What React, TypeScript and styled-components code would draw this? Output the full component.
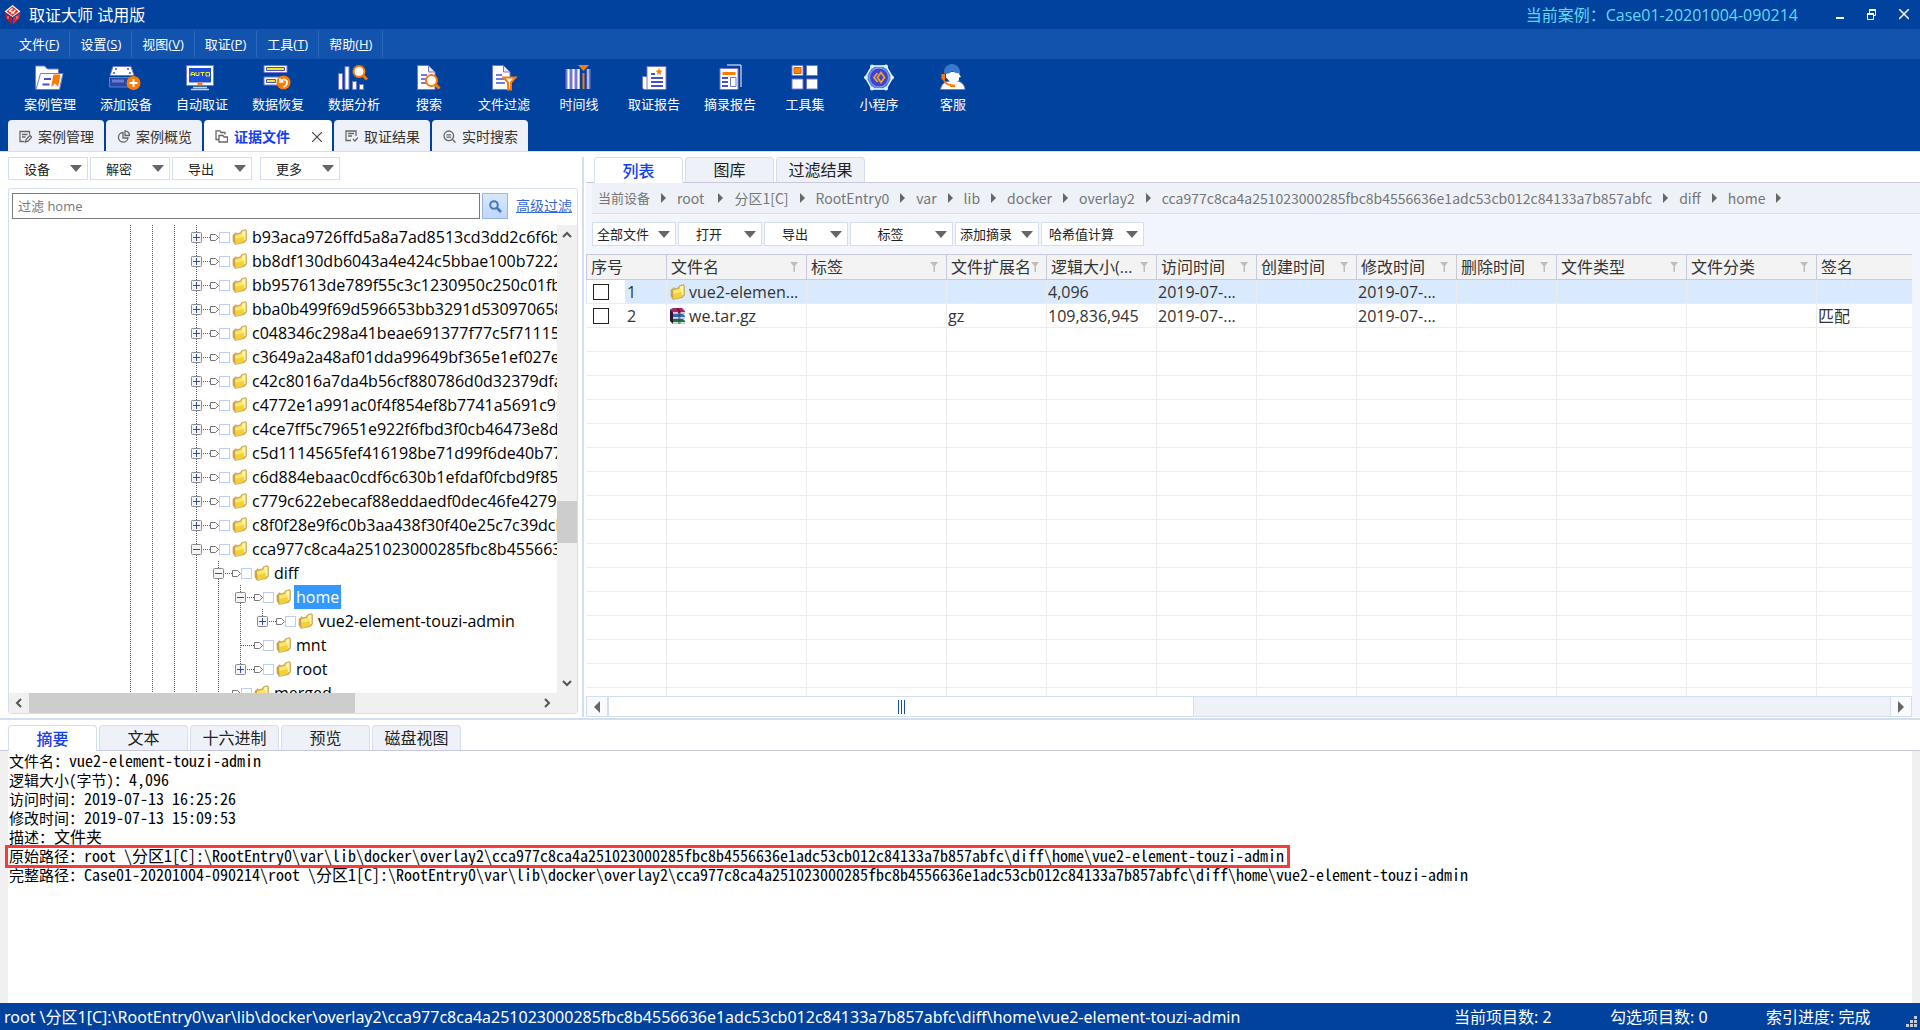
import React, { useState } from "react";
import styled, { createGlobalStyle, css } from "styled-components";

const UI = `"Open Sans", "Noto Sans CJK SC", sans-serif`;
const PATH = `"Noto Sans CJK SC", sans-serif`;
const STATUS = `"Noto Sans", "Noto Sans CJK SC", sans-serif`;
const MONO = `"Noto Sans Mono CJK SC", "Noto Sans CJK SC", "Liberation Mono", monospace`;

const c = {
  navy: "#00429e",
  menu: "#1253ae",
  line: "#d3def0",
  edge: "#c8c9dc",
  pale: "#eef2f8",
  panel: "#f2f5fb",
  blue: "#1240f0",
  orange: "#ff7a00",
  violet: "#7577cf",
  indigo: "#4550cf",
};

const Global = createGlobalStyle`
  *, *::before, *::after { box-sizing: border-box; }
  html, body, #root { height: 100%; }
  body { margin: 0; background: #fff; font-family: ${UI}; color: #222; }
  button, input { font-family: inherit; }
  ul, ol, dl, dd { margin: 0; padding: 0; list-style: none; }
`;

const Window = styled.div`
  height: 100vh;
  display: grid;
  grid-template-rows: auto minmax(0, 2fr) auto minmax(0, 1fr) auto;
  overflow: hidden;
`;

/* ---------- header ---------- */

const Header = styled.header`
  background: ${c.navy};
  border-bottom: 1px solid ${c.line};
  color: #fff;
`;

const TitleBar = styled.div`
  display: flex;
  align-items: center;
  height: 29px;
  padding: 0 10px 0 4px;
`;

const AppName = styled.h1`
  flex: 1;
  margin: 0 0 0 8px;
  font-size: 16px;
  line-height: 24px;
  font-weight: 400;
`;

const CaseName = styled.span`
  font-size: 16px;
  line-height: 24px;
  color: #5fd9f6;
  margin-right: 26px;
`;

const WindowButton = styled.button`
  display: flex;
  align-items: center;
  justify-content: center;
  width: 32px;
  height: 24px;
  padding: 0;
  border: 0;
  background: none;
  color: #fff;
  &:last-child { width: 24px; margin-left: 4px; margin-right: -6px; }
`;

const MenuBar = styled.nav`
  display: flex;
  height: 30px;
  padding: 2px 0 2px 9px;
  background: ${c.menu};
`;

const MenuItem = styled.button`
  padding: 0 10px;
  border: 0;
  border-right: 1px solid #2c69bd;
  background: none;
  color: #fff;
  font-size: 13px;
  line-height: 24px;
`;

const Tools = styled.div`
  display: flex;
  height: 61px;
  padding: 4px 12px 0;
`;

const Tool = styled.button`
  display: flex;
  flex-direction: column;
  align-items: center;
  gap: 1px;
  min-width: 74px;
  padding: 0 12px;
  border: 0;
  background: none;
  color: #fff;
  font-size: 13px;
  line-height: 20px;
  white-space: nowrap;
`;

const ToolIcon = styled.svg`
  display: block;
  flex: none;
  overflow: visible;
`;

const WorkTabs = styled.div`
  display: flex;
  gap: 2px;
  height: 31px;
  padding-left: 8px;
`;

const WorkTab = styled.button<{ $active?: boolean }>`
  display: flex;
  align-items: center;
  gap: 6px;
  padding: 2px 10px 0 11px;
  border: 0;
  border-radius: 4px 4px 0 0;
  background: ${(p) => (p.$active ? "#fff" : c.pale)};
  color: ${(p) => (p.$active ? c.blue : "#333")};
  font-size: 14px;
  line-height: 20px;
  font-weight: ${(p) => (p.$active ? 700 : 400)};
  svg { color: #666; }
`;

const CloseMark = styled.svg`
  margin-left: 16px;
`;

/* ---------- shared parts ---------- */

const DropButton = styled.button<{ $wide?: boolean; $side?: boolean }>`
  display: flex;
  align-items: center;
  width: ${(p) => (p.$side ? 80 : p.$wide ? 103 : 84)}px;
  height: ${(p) => (p.$side ? 23 : 24)}px;
  padding: 0 5px 0 0;
  border: 1px solid ${c.line};
  background: #fff;
  color: #222;
  font-size: 13px;
  line-height: 20px;
  white-space: nowrap;
  span { flex: 1; padding-right: 5px; text-align: center; }
`;

const PageTabs = styled.div`
  display: flex;
  gap: 2px;
  height: 26px;
  padding-left: 8px;
  border-bottom: 1px solid ${c.edge};
`;

const PageTab = styled.button<{ $active?: boolean }>`
  width: 89px;
  padding: 0;
  border: 1px solid ${c.line};
  border-bottom: 0;
  border-radius: 4px 4px 0 0;
  background: ${(p) => (p.$active ? "#fff" : c.pale)};
  color: ${(p) => (p.$active ? c.blue : "#222")};
  font-size: 16px;
  line-height: 24px;
  font-weight: ${(p) => (p.$active ? 500 : 400)};
  margin-bottom: ${(p) => (p.$active ? -1 : 0)}px;
`;

/* ---------- left pane ---------- */

const Upper = styled.main`
  display: grid;
  grid-template-columns: 582px 2px minmax(0, 1fr);
  padding: 5px 0 1px;
`;

const Divider = styled.div`
  background: ${c.line};
`;

const SidePane = styled.section`
  display: flex;
  flex-direction: column;
  gap: 8px;
  min-height: 0;
  padding: 0 4px 3px 8px;
`;

const SideTools = styled.div`
  display: flex;
  gap: 2px;
  button:last-child { margin-left: 6px; }
`;

const SideBox = styled.div`
  flex: 1;
  min-height: 0;
  display: flex;
  flex-direction: column;
  border: 1px solid ${c.line};
  border-radius: 3px;
`;

const FilterRow = styled.form`
  display: flex;
  align-items: center;
  height: 36px;
  padding: 0 5px 2px 3px;
`;

const FilterInput = styled.input`
  flex: 1;
  min-width: 0;
  height: 26px;
  padding: 0 5px;
  border: 1px solid #7a7a7a;
  font-size: 13px;
  &::placeholder { color: #777; opacity: 1; }
`;

const SearchButton = styled.button`
  display: flex;
  align-items: center;
  justify-content: center;
  width: 26px;
  height: 26px;
  margin: 0 8px 0 2px;
  padding: 0;
  border: 1px solid #9bb7e0;
  background: linear-gradient(#d9e7fd, #bfd7fb);
`;

const AdvancedLink = styled.a`
  color: #3568d4;
  font-size: 14px;
  line-height: 20px;
`;

const TreeFrame = styled.div`
  flex: 1;
  min-height: 0;
  display: grid;
  grid-template: minmax(0, 1fr) 20px / minmax(0, 1fr) 20px;
`;

const Tree = styled.ul`
  overflow: hidden;
  padding-left: 110px;
`;

const TreeRow = styled.li`
  display: flex;
  align-items: center;
  height: 24px;
  svg { flex: none; }
`;

const TreeCheck = styled.input`
  appearance: none;
  flex: none;
  width: 11px;
  height: 11px;
  margin: 0 2px 0 0;
  border: 1px solid #b9cdf5;
  background: #fff;
`;

const TreeLabel = styled.span<{ $selected?: boolean }>`
  margin-left: 3px;
  padding: 0 2px;
  font-size: 16px;
  line-height: 24px;
  white-space: nowrap;
  color: ${(p) => (p.$selected ? "#fff" : "#000")};
  background: ${(p) => (p.$selected ? "#3399ff" : "transparent")};
`;

const ScrollTrack = styled.div<{ $horizontal?: boolean }>`
  display: flex;
  flex-direction: ${(p) => (p.$horizontal ? "row" : "column")};
  align-items: center;
  justify-content: space-between;
  background: #f0f0f0;
  ${(p) => p.$horizontal && css`padding-right: 20px; grid-column: 1 / 3;`}
`;

const ArrowButton = styled.button`
  display: flex;
  align-items: center;
  justify-content: center;
  width: 20px;
  height: 20px;
  padding: 0;
  border: 0;
  background: none;
`;

const ScrollRun = styled.div<{ $horizontal?: boolean }>`
  flex: 1;
  display: flex;
  align-self: stretch;
  flex-direction: ${(p) => (p.$horizontal ? "row" : "column")};
`;

const Space = styled.div<{ $grow: number }>`
  flex: ${(p) => p.$grow} 1 0;
`;

const Thumb = styled.div<{ $grow: number }>`
  flex: ${(p) => p.$grow} 1 0;
  background: #cdcdcd;
`;

/* ---------- right pane ---------- */

const ListPane = styled.section`
  display: flex;
  flex-direction: column;
  min-width: 0;
  min-height: 0;
  margin-left: 2px;
`;

const ListBody = styled.div`
  flex: 1;
  min-height: 0;
  display: flex;
  flex-direction: column;
  padding-right: 8px;
  background: ${c.panel};
`;

const Crumbs = styled.ol`
  display: flex;
  align-items: center;
  gap: 11px;
  height: 31px;
  margin: 0 -8px 0 6px;
  padding: 0 6px;
  background: ${c.pale};
  border-bottom: 1px solid ${c.line};
  font-family: ${PATH};
  overflow: hidden;
`;

const Crumb = styled.li<{ $cjk?: boolean }>`
  display: flex;
  align-items: center;
  gap: 11px;
  font-size: ${(p) => (p.$cjk ? 13 : 14)}px;
  line-height: 20px;
  color: #757575;
  white-space: pre;
`;

const ListTools = styled.div`
  display: flex;
  gap: 2px;
  padding: 8px 6px;
`;

const GridClip = styled.div`
  flex: 1;
  min-height: 0;
  overflow: hidden;
  background: #fff;
`;

const Grid = styled.table`
  width: 100%;
  table-layout: fixed;
  border-collapse: separate;
  border-spacing: 0;
  font-size: 16px;
  line-height: 22px;
`;

const Col = styled.col<{ $w?: number }>`
  ${(p) => p.$w && css`width: ${p.$w}px;`}
`;

const HeadCell = styled.th`
  height: 26px;
  padding: 0 8px 0 4px;
  text-align: left;
  font-weight: 400;
  color: #333;
  background: #f3f3f3;
  border: 1px solid ${c.edge};
  border-width: 1px 0 1px 1px;
`;

const HeadInner = styled.div`
  display: flex;
  align-items: center;
  justify-content: space-between;
  white-space: nowrap;
  svg { flex: none; }
`;

const Row = styled.tr<{ $selected?: boolean }>`
  background: ${(p) => (p.$selected ? "#d9eaff" : "#fff")};
`;

const Cell = styled.td`
  height: 24px;
  padding: 0 1px;
  border-left: 1px solid #ececec;
  border-bottom: 1px solid #ececec;
  color: #333;
  white-space: nowrap;
  overflow: hidden;
  &:first-child { border-left-color: transparent; padding: 0; }
`;

const IndexBox = styled.label`
  display: flex;
  align-items: center;
  height: 23px;
  span { padding-left: 2px; }
`;

const PickBox = styled.div`
  display: flex;
  align-items: center;
  align-self: stretch;
  width: 38px;
  padding-left: 6px;
  background: #fff;
  input {
    appearance: none;
    width: 16px;
    height: 16px;
    margin: 0;
    border: 1px solid #222;
    background: #fff;
  }
`;

const FileName = styled.span`
  display: flex;
  align-items: center;
  gap: 4px;
  padding-left: 2px;
`;

const WideScroll = styled.div`
  display: flex;
  height: 21px;
`;

const WideArrow = styled.button`
  display: flex;
  align-items: center;
  justify-content: center;
  width: 22px;
  padding: 0;
  border: 1px solid ${c.line};
  background: #f8fafd;
`;

const WideThumb = styled.div`
  flex: 586 1 0;
  display: flex;
  align-items: center;
  justify-content: center;
  gap: 2px;
  border: 1px solid ${c.line};
  background: #fff;
`;

const GripLine = styled.i`
  width: 1px;
  height: 14px;
  background: #17539f;
`;

const WideRest = styled.div`
  flex: 698 1 0;
  background: ${c.pale};
  border: 1px solid ${c.line};
  border-width: 1px 0;
`;

/* ---------- lower pane ---------- */

const Lower = styled.section`
  display: flex;
  flex-direction: column;
  min-height: 0;
  padding-top: 5px;
`;

const Splitter = styled.div`
  height: 2px;
  background: ${c.line};
`;

const Summary = styled.dl`
  flex: 1;
  min-height: 0;
  padding: 0 1px;
  border: 0 solid #f0f0f0;
  border-width: 0 8px;
  font-family: ${MONO};
  line-height: 19px;
  color: #000;
`;

const Fact = styled.div<{ $marked?: boolean }>`
  position: relative;
  display: flex;
  width: max-content;
  height: 19px;
  ${(p) =>
    p.$marked &&
    css`
      &::after {
        content: "";
        position: absolute;
        inset: -1px -6px -3px -4px;
        border: 3px solid #f93a3a;
      }
    `}
  dt { font-size: 15px; }
  dd { font-size: 16px; white-space: pre; }
`;

const StatusBar = styled.footer`
  display: grid;
  grid-template-columns: minmax(0, 1fr) 156px 156px 140px 14px;
  align-items: center;
  height: 27px;
  padding: 0 0 0 4px;
  background: ${c.navy};
  color: #fff;
  font-family: ${STATUS};
  font-size: 16px;
  line-height: 24px;
  white-space: nowrap;
  svg { align-self: end; margin-bottom: 2px; }
`;

/* ---------- drawings ---------- */

const Logo = () => (
  <svg width="17" height="20" viewBox="0 0 17 20" aria-hidden="true">
    <path d="M8.500 0 16.500 6.500 8.500 12 .5 6.500Z" fill="#fff" />
    <path d="M8.500 1.500 14.500 6.500 8.500 11 2.500 6.500Z" fill="#e8372c" />
    <path d="M5 6.500 8.500 3.500M7.500 8.500l4-3.500M5.500 6l5 2" stroke="#fff" strokeWidth="1.300" fill="none" />
    <path d="M.5 7.500 8 12.800V19.500L1.500 13Z" fill="#c8141b" />
    <path d="M16.500 7.500 9 12.800V19.500L15.500 13Z" fill="#e2252a" />
    <path d="M4 11v3M13 11v3" stroke="#f3b0b0" strokeWidth="1" />
  </svg>
);

const Down = () => (
  <svg width="12" height="7" viewBox="0 0 12 7" aria-hidden="true">
    <path d="M0 0h12L6 7Z" fill="#666" />
  </svg>
);

const CrumbArrow = () => (
  <svg width="5" height="10" viewBox="0 0 5 10" aria-hidden="true">
    <path d="M0 0 5 5 0 10Z" fill="#666" />
  </svg>
);

const Funnel = () => (
  <svg width="8" height="10" viewBox="0 0 8 10" aria-hidden="true">
    <path d="M0 0h8L5 4v6H3.500V4Z" fill="#bdbdbd" />
  </svg>
);

const Folder = () => (
  <svg width="15" height="16" viewBox="0 0 15 16" aria-hidden="true">
    <path d="M1 6 4 3.500V5l5-1.500V2l4.500-1.500L14.500 2v9l-2 2.500L3 15.500 1 12Z" fill="#d9b04a" stroke="#c29a3c" strokeWidth=".6" />
    <path d="M4.500 6.500 9.500 5l.5-2.500L13.500 1.500v9.500L4.500 13.500Z" fill="#fff3b0" />
    <path d="M3 6.500 11 4.500l1 8L3.500 15Z" fill="#fae66a" />
    <path d="M3.500 10 11.500 8l.5 4.500L3.500 15Z" fill="#f2d038" />
    <path d="M1 6 3 6.500 3.500 15 1 12Z" fill="#c8a24b" />
  </svg>
);

const Archive = () => (
  <svg width="15" height="16" viewBox="0 0 15 16" aria-hidden="true">
    <path d="M0 1.500 3 0h9l3 3v2.500H3Z" fill="#b0226b" />
    <path d="M3 4h12v1.500H3Z" fill="#e9c7dd" />
    <path d="M1 6h12l2 2v2.500H3L1 8Z" fill="#2a6fc4" />
    <path d="M3 9h12v1.500H3Z" fill="#d5e0fa" />
    <path d="M1 11h12l2 2v2.500H3L1 13Z" fill="#14783c" />
    <path d="M3 14h12v1.500H3Z" fill="#cfeeda" />
    <path d="M0 1.500 3 4.500V16L0 13Z" fill="#33122e" />
    <path d="M6 0h2.500l2 3v2.500H8V3Z" fill="#6b1f2a" />
    <path d="M8 5.500h2.500V16H8Z" fill="#4a3a4a" opacity=".5" />
  </svg>
);

const Magnifier = () => (
  <svg width="13" height="13" viewBox="0 0 13 13" fill="none" stroke="#4a77bd" aria-hidden="true">
    <circle cx="5" cy="5" r="3.800" strokeWidth="2" />
    <path d="m8 8 4 4" strokeWidth="2.600" />
  </svg>
);

const Chevron = ({ d }: { d: string }) => (
  <svg width="10" height="10" viewBox="0 0 10 10" fill="none" stroke="#555" strokeWidth="2" aria-hidden="true">
    <path d={d} />
  </svg>
);

const Sheet = () => (
  <>
    <path d="M5.500 2.500h11l6.500 6.500v17.500H5.500Z" fill="#fff" stroke={c.violet} />
    <path d="M16.500 3v6h6" fill="#e4e6fa" stroke={c.violet} />
  </>
);

const toolIcons: Record<string, React.ReactNode> = {
  案例管理: (
    <>
      <path d="M2.500 3h9l3 3h11v5h-3L6 26H2.500Z" fill="#fff" stroke={c.violet} />
      <path d="M7.500 10.500h22.500L26.500 26.500H3Z" fill="#fff" stroke={c.violet} />
      <path d="M11 16h7M9.500 21.500h7" stroke={c.indigo} strokeWidth="2" />
      <path d="M20.500 11.500h7l-2.500 12.500-3-3.500-4 3.500Z" fill={c.orange} />
    </>
  ),
  添加设备: (
    <>
      <path d="M4 3.500h18l3 9h-24Z" fill="#fff" stroke={c.violet} />
      <path d="M.5 14.500h25v9.500H.5Z" fill="#234aa8" stroke={c.violet} />
      <path d="M3 18h12" stroke={c.violet} strokeWidth="3" />
      <path d="M6 6h2M18 6h2M4 10h2M20 10h2" stroke={c.indigo} strokeWidth="1.500" />
      <circle cx="24.500" cy="20" r="7" fill={c.orange} />
      <path d="M24.500 16v8M20.500 20h8" stroke="#fff" strokeWidth="2" />
    </>
  ),
  自动取证: (
    <>
      <path d="M1.500 2.500h27v20h-27Z" fill="#fff" stroke={c.violet} />
      <path d="M4 5h22v14.500H4Z" fill="#1c4fd8" />
      <path d="M12.500 19.500h5v2.500h-5Z" fill={c.orange} />
      <path d="M6 13v-3l1-.5h1.500l1 .5v3M6 11.500h3.500M11 9v3.500h3V9M15.500 9.500h4M17.500 9.500V13M21 9.500h3.500v3.500H21Z" stroke="#f2ef2a" fill="none" />
      <path d="M8 24.500h14M6 26.500h18" stroke="#c9cdf3" strokeWidth="1.500" />
    </>
  ),
  数据恢复: (
    <>
      <path d="M3 2.500h23v7H3Z" fill="#fff" stroke={c.violet} />
      <path d="M5.500 4.500h18v3h-18Z" fill="#f0e62a" stroke={c.indigo} />
      <path d="M3 14h20v8H3Z" fill="#fff" stroke={c.violet} />
      <path d="M5.500 16.500h9v3h-9Z" fill="#f0e62a" stroke={c.indigo} />
      <circle cx="22.500" cy="19.500" r="7" fill={c.orange} />
      <path d="m19 15.500.2 3.500 3.300-.5M19.500 18.500c2.500-4 8-1.500 6 3-.6 1.400-1.800 2-3 2.500" stroke="#fff" strokeWidth="1.800" fill="none" />
    </>
  ),
  数据分析: (
    <>
      <path d="M1.500 10.500h4v16h-4ZM8 3.500h4v23H8ZM15.500 18.500h4v8h-4ZM22.500 21.500h4v5h-4Z" fill="#fff" stroke={c.violet} />
      <circle cx="22" cy="8.500" r="5.500" fill="#fff" stroke={c.orange} strokeWidth="2" />
      <path d="m26 12.500 4 4" stroke={c.orange} strokeWidth="3" />
    </>
  ),
  搜索: (
    <>
      <Sheet />
      <path d="M9 12h6M9 16h5M9 20h5" stroke={c.indigo} strokeWidth="1.500" />
      <circle cx="19.500" cy="17.500" r="5.500" fill="#fff" stroke={c.orange} strokeWidth="2" />
      <path d="m23.500 21.500 4 4" stroke={c.orange} strokeWidth="3" />
    </>
  ),
  文件过滤: (
    <>
      <Sheet />
      <path d="M9 12h6M9 16h9M9 20h9" stroke={c.indigo} strokeWidth="1.500" />
      <path d="M16.500 14.500h12l-4.500 5v7h-3v-7Z" fill="#fff" stroke={c.orange} strokeWidth="2" />
    </>
  ),
  时间线: (
    <>
      <path d="M1.500 6h25v20h-25Z" fill={c.violet} />
      <path d="M4.500 6v20M9.500 6v20M14.500 6v20" stroke="#fff" strokeWidth="2" />
      <path d="M16 6h6.500v20H16Z" fill={c.navy} />
      <path d="M24 6v20" stroke="#fff" />
      <path d="M14 2h11l-5.500 6Z" fill={c.orange} />
      <path d="M19.500 10v16" stroke={c.orange} strokeWidth="2" />
    </>
  ),
  取证报告: (
    <>
      <path d="M3.500 13.500h6v13H5l-1.500-1.500Z" fill="#fff" stroke={c.violet} />
      <path d="M8 3.500h19v23H8Z" fill="#fff" stroke={c.violet} />
      <path d="M12 11h4M12 15h12M12 19h12M12 23h12" stroke={c.indigo} strokeWidth="2" />
      <path d="m20 5 1 2.500 2.500.2-2 1.800.7 2.500-2.200-1.500-2.200 1.500.7-2.500-2-1.800 2.500-.2Z" fill={c.orange} />
    </>
  ),
  摘录报告: (
    <>
      <path d="M12 2h14v22" fill="none" stroke="#fff" />
      <path d="M5 5.500h18v21H5Z" fill="#fff" stroke={c.violet} />
      <path d="M7.500 10.500h13" stroke={c.orange} strokeWidth="3" />
      <path d="M7 15h6M7 19h6M7 23h6" stroke={c.indigo} strokeWidth="2" />
      <path d="M15.500 14.500h5.500v9h-5.500Z" fill="#fff" stroke={c.violet} />
    </>
  ),
  工具集: (
    <>
      <path d="M2 2.500h11v10H2ZM16.500 2.500h11v10h-11ZM2 16h11v10H2ZM16.500 16h11v10h-11Z" fill="#fff" stroke={c.violet} />
      <path d="M4 4.500h7v6H4Z" fill="#ff8a00" stroke="#e84e1c" />
    </>
  ),
  小程序: (
    <>
      <path d="M8 3h14l6.500 11.500L22 26H8L1.500 14.500Z" fill="#4a86d8" stroke="#fff" strokeWidth="1.500" />
      <circle cx="15" cy="14.500" r="9.500" fill="#3c44d8" stroke="#8fa4ea" />
      <path d="M13.500 10 10 14.500l3.500 4.500M17 9.500l3.500 5L17 19.500l-3.500-5Z" fill="none" stroke="#f5a21b" strokeWidth="1.800" />
      <g fill="#d9f3ff">
        <circle cx="8" cy="3.500" r="2" /><circle cx="22" cy="3.500" r="2" /><circle cx="28" cy="14.500" r="2" />
        <circle cx="22" cy="25.500" r="2" /><circle cx="8" cy="25.500" r="2" /><circle cx="2" cy="14.500" r="2" />
      </g>
    </>
  ),
  客服: (
    <>
      <path d="M2.500 26.500c1-6 5-8 9-8.500h6c5 0 9 3 9.500 8.500Z" fill="#fff" stroke={c.violet} />
      <path d="M8 9h14l-1 2 2 3-2 .5v3l-4 2h-4l-5-5Z" fill="#fff" />
      <path d="M6 10a8 8 0 0 1 16-2v2c-4 1-6-1-8-2-1 2-4 3-7 3Z" fill="#3a78cc" />
      <path d="M3.500 11h3.500v5.500H3.500Z" fill={c.orange} />
      <path d="M5.500 16c1 4 4 6 8 6" stroke={c.orange} fill="none" strokeWidth="1.500" />
      <path d="M12 21.500h5v2.500h-5Z" fill={c.orange} />
    </>
  ),
};

/* These drawings hang to the left of their labels' centre line. */
const leaning = new Set(["案例管理", "添加设备", "自动取证", "数据恢复", "数据分析", "搜索", "文件过滤"]);

const Stroke = styled.svg.attrs({ width: 13, height: 13, viewBox: "0 0 13 13", "aria-hidden": true })`
  fill: none;
  stroke: currentColor;
  stroke-width: 1.3;
`;

const tabIcons: Record<string, React.ReactNode> = {
  案例管理: <path d="M10.500 4.500V1.500H1v10h4.500M3 4.500h5.500M3 7h3.500M6.500 12l.7-2.700L11 5.500l1.700 1.700L9 11.200Z" />,
  案例概览: <path d="M6 2.500A4.800 4.800 0 1 0 11 8H6ZM8 .800V5.500h4.500A4.600 4.600 0 0 0 8 .800Z" />,
  证据文件: <path d="M3.500 9.500H1V.800h4L6 2.500h4v2M4 5.500h4l1 1.500h3.500v5H4Z" />,
  取证结果: <path d="M11 6V1H1v9.500h5M3 3.500h6M3 6h4M8 9l2 2 3-3.500" />,
  实时搜索: (
    <>
      <circle cx="5.800" cy="5.800" r="4.800" />
      <path d="m9.500 9.500 3 3M3.500 4.800h4.600M3.500 7.200h4.600" />
    </>
  ),
};

/* ---------- tree ---------- */

type Guide = "through" | "plus" | "plusEnd" | "minus" | "plusTop" | "tee";

const GuideCell = ({ kind }: { kind: Guide }) => {
  const boxed = kind.startsWith("plus") || kind.startsWith("minus");
  const toMiddle = kind === "plusEnd" || kind === "plusTop";
  return (
    <svg width="22" height="24" viewBox="0 0 22 24" aria-hidden="true">
      <path d={`M11.500 0V${toMiddle ? 12 : 24}`} stroke="#555" strokeDasharray="1 1" />
      {kind !== "through" && <path d="M12 12.500H22" stroke="#555" strokeDasharray="1 1" />}
      {boxed && (
        <>
          <rect x="6.500" y="7.500" width="10" height="10" rx="1" fill="#f4f4f4" stroke="#8a8a8a" />
          <path d={kind.startsWith("plus") ? "M8 12.500h7M11.500 9v7" : "M8 12.500h7"} stroke="#2f4f96" />
        </>
      )}
    </svg>
  );
};

const Pointer = () => (
  <svg width="12" height="9" viewBox="0 0 12 9" aria-hidden="true">
    <path d="M0 4.500H3" stroke="#555" strokeDasharray="1 1" />
    <path d="M3.500 1.500h5l3 3-3 3h-5Z" fill="#fff" stroke="#777" />
  </svg>
);

const rail: Guide[] = ["through", "through", "through"];
const hashes = [
  "b93aca9726ffd5a8a7ad8513cd3dd2c6f6b2a",
  "bb8df130db6043a4e424c5bbae100b7222f",
  "bb957613de789f55c3c1230950c250c01fb3",
  "bba0b499f69d596653bb3291d530970658a",
  "c048346c298a41beae691377f77c5f71115c",
  "c3649a2a48af01dda99649bf365e1ef027e0",
  "c42c8016a7da4b56cf880786d0d32379dfa",
  "c4772e1a991ac0f4f854ef8b7741a5691c99",
  "c4ce7ff5c79651e922f6fbd3f0cb46473e8d",
  "c5d1114565fef416198be71d99f6de40b77",
  "c6d884ebaac0cdf6c630b1efdaf0fcbd9f85",
  "c779c622ebecaf88eddaedf0dec46fe42799",
  "c8f0f28e9f6c0b3aa438f30f40e25c7c39dcb",
];

const nodes: { label: string; guides: Guide[] }[] = [
  ...hashes.map((label) => ({ label, guides: [...rail, "plus"] as Guide[] })),
  { label: "cca977c8ca4a251023000285fbc8b4556636", guides: [...rail, "minus"] },
  { label: "diff", guides: [...rail, "through", "minus"] },
  { label: "home", guides: [...rail, "through", "through", "minus"] },
  { label: "vue2-element-touzi-admin", guides: [...rail, "through", "through", "through", "plusTop"] },
  { label: "mnt", guides: [...rail, "through", "through", "tee"] },
  { label: "root", guides: [...rail, "through", "through", "plusEnd"] },
  { label: "merged", guides: [...rail, "through", "tee"] },
];

/* ---------- data ---------- */

const menus = [["文件", "F"], ["设置", "S"], ["视图", "V"], ["取证", "P"], ["工具", "T"], ["帮助", "H"]];

const crumbs = [
  "root ", "分区1[C]", "RootEntry0", "var", "lib", "docker", "overlay2",
  "cca977c8ca4a251023000285fbc8b4556636e1adc53cb012c84133a7b857abfc", "diff", "home",
];

const columns: { name: string; width?: number; filter?: boolean }[] = [
  { name: "序号", width: 80 },
  { name: "文件名", width: 140, filter: true },
  { name: "标签", width: 140, filter: true },
  { name: "文件扩展名", width: 100, filter: true },
  { name: "逻辑大小(...", width: 110, filter: true },
  { name: "访问时间", width: 100, filter: true },
  { name: "创建时间", width: 100, filter: true },
  { name: "修改时间", width: 100, filter: true },
  { name: "删除时间", width: 100, filter: true },
  { name: "文件类型", width: 130, filter: true },
  { name: "文件分类", width: 130, filter: true },
  { name: "签名" },
];

const files = [
  { name: "vue2-elemen...", icon: <Folder />, rest: ["", "", "4,096", "2019-07-...", "", "2019-07-...", "", "", "", ""] },
  { name: "we.tar.gz", icon: <Archive />, rest: ["", "gz", "109,836,945", "2019-07-...", "", "2019-07-...", "", "", "", "匹配"] },
];

const device = "root \\分区1[C]:\\RootEntry0\\var\\lib\\docker\\overlay2\\cca977c8ca4a251023000285fbc8b4556636e1adc53cb012c84133a7b857abfc\\diff\\home\\vue2-element-touzi-admin";

const facts: { term: string; value: string; marked?: boolean }[] = [
  { term: "文件名：", value: "vue2-element-touzi-admin" },
  { term: "逻辑大小(字节)：", value: "4,096" },
  { term: "访问时间：", value: "2019-07-13 16:25:26" },
  { term: "修改时间：", value: "2019-07-13 15:09:53" },
  { term: "描述：", value: "文件夹" },
  { term: "原始路径：", value: device, marked: true },
  { term: "完整路径：", value: `Case01-20201004-090214\\${device}` },
];

const listTools: [string, boolean][] = [
  ["全部文件", false], ["打开", false], ["导出", false], ["标签", true], ["添加摘录", false], ["哈希值计算", true],
];

export default function App() {
  const [view, setView] = useState("列表");
  const [detail, setDetail] = useState("摘要");
  const [selected, setSelected] = useState("home");

  return (
    <Window>
      <Global />
      <Header>
        <TitleBar>
          <Logo />
          <AppName>取证大师 试用版</AppName>
          <CaseName>当前案例：Case01-20201004-090214</CaseName>
          <WindowButton aria-label="最小化">
            <svg width="8" height="10" viewBox="0 0 8 10"><path d="M0 8h8" stroke="#fff" strokeWidth="2" /></svg>
          </WindowButton>
          <WindowButton aria-label="还原">
            <svg width="10" height="12" viewBox="0 0 10 12" fill="none" stroke="#fff">
              <path d="M2.500 4V1h6v5.500H7" /><path d="M2 1h7" strokeWidth="2" />
              <path d="M.5 5.500h6v5h-6Z" /><path d="M0 5h7" strokeWidth="2" />
            </svg>
          </WindowButton>
          <WindowButton aria-label="关闭">
            <svg width="10" height="12" viewBox="0 0 10 12"><path d="m0 0 10 10M10 0 0 10" stroke="#fff" strokeWidth="1.500" /></svg>
          </WindowButton>
        </TitleBar>
        <MenuBar>
          {menus.map(([name, key]) => (
            <MenuItem key={key}>{name}(<u>{key}</u>)</MenuItem>
          ))}
        </MenuBar>
        <Tools>
          {Object.keys(toolIcons).map((name) => (
            <Tool key={name}>
              <ToolIcon
                width="30"
                height="30"
                viewBox={leaning.has(name) ? "2 0 30 30" : "0 0 30 30"}
                fill="none"
                aria-hidden="true"
              >
                {toolIcons[name]}
              </ToolIcon>
              {name}
            </Tool>
          ))}
        </Tools>
        <WorkTabs>
          {Object.keys(tabIcons).map((name) => (
            <WorkTab key={name} $active={name === "证据文件"}>
              <Stroke>{tabIcons[name]}</Stroke>
              {name}
              {name === "证据文件" && (
                <CloseMark width="10" height="10" viewBox="0 0 10 10" aria-hidden="true">
                  <path d="m0 0 10 10M10 0 0 10" stroke="#444" strokeWidth="1.200" />
                </CloseMark>
              )}
            </WorkTab>
          ))}
        </WorkTabs>
      </Header>

      <Upper>
        <SidePane>
          <SideTools>
            {["设备", "解密", "导出", "更多"].map((name) => (
              <DropButton key={name} $side><span>{name}</span><Down /></DropButton>
            ))}
          </SideTools>
          <SideBox>
            <FilterRow onSubmit={(e) => e.preventDefault()}>
              <FilterInput aria-label="过滤" placeholder="过滤 home" />
              <SearchButton aria-label="搜索"><Magnifier /></SearchButton>
              <AdvancedLink href="#advanced">高级过滤</AdvancedLink>
            </FilterRow>
            <TreeFrame>
              <Tree>
                {nodes.map((n) => (
                  <TreeRow key={n.label} onClick={() => setSelected(n.label)}>
                    {n.guides.map((g, i) => <GuideCell key={i} kind={g} />)}
                    <Pointer />
                    <TreeCheck type="checkbox" aria-label={n.label} />
                    <Folder />
                    <TreeLabel $selected={n.label === selected}>{n.label}</TreeLabel>
                  </TreeRow>
                ))}
              </Tree>
              <ScrollTrack>
                <ArrowButton aria-label="向上"><Chevron d="M1 7 5 3l4 4" /></ArrowButton>
                <ScrollRun><Space $grow={256} /><Thumb $grow={42} /><Space $grow={130} /></ScrollRun>
                <ArrowButton aria-label="向下"><Chevron d="M1 3l4 4 4-4" /></ArrowButton>
              </ScrollTrack>
              <ScrollTrack $horizontal>
                <ArrowButton aria-label="向左"><Chevron d="M7 1 3 5l4 4" /></ArrowButton>
                <ScrollRun $horizontal><Thumb $grow={326} /><Space $grow={182} /></ScrollRun>
                <ArrowButton aria-label="向右"><Chevron d="M3 1l4 4-4 4" /></ArrowButton>
              </ScrollTrack>
            </TreeFrame>
          </SideBox>
        </SidePane>
        <Divider />
        <ListPane>
          <PageTabs>
            {["列表", "图库", "过滤结果"].map((t) => (
              <PageTab key={t} $active={t === view} onClick={() => setView(t)}>{t}</PageTab>
            ))}
          </PageTabs>
          <ListBody>
            <Crumbs>
              <Crumb $cjk>当前设备<CrumbArrow /></Crumb>
              {crumbs.map((t) => <Crumb key={t}>{t}<CrumbArrow /></Crumb>)}
            </Crumbs>
            <ListTools>
              {listTools.map(([name, wide]) => (
                <DropButton key={name} $wide={wide}><span>{name}</span><Down /></DropButton>
              ))}
            </ListTools>
            <GridClip>
              <Grid>
                <colgroup>{columns.map((k) => <Col key={k.name} $w={k.width} />)}</colgroup>
                <thead>
                  <tr>
                    {columns.map((k) => (
                      <HeadCell key={k.name}>
                        <HeadInner>{k.name}{k.filter && <Funnel />}</HeadInner>
                      </HeadCell>
                    ))}
                  </tr>
                </thead>
                <tbody>
                  {files.map((f, i) => (
                    <Row key={f.name} $selected={i === 0}>
                      <Cell>
                        <IndexBox>
                          <PickBox><input type="checkbox" /></PickBox>
                          <span>{i + 1}</span>
                        </IndexBox>
                      </Cell>
                      <Cell><FileName>{f.icon}{f.name}</FileName></Cell>
                      {f.rest.map((t, j) => <Cell key={j}>{t}</Cell>)}
                    </Row>
                  ))}
                  {Array.from({ length: 16 }, (_, i) => (
                    <Row key={i}>{columns.map((k) => <Cell key={k.name} />)}</Row>
                  ))}
                </tbody>
              </Grid>
            </GridClip>
            <WideScroll>
              <WideArrow aria-label="向左"><svg width="6" height="12" viewBox="0 0 6 12"><path d="M6 0v12L0 6Z" fill="#666" /></svg></WideArrow>
              <WideThumb><GripLine /><GripLine /><GripLine /></WideThumb>
              <WideRest />
              <WideArrow aria-label="向右"><svg width="6" height="12" viewBox="0 0 6 12"><path d="M0 0v12l6-6Z" fill="#666" /></svg></WideArrow>
            </WideScroll>
          </ListBody>
        </ListPane>
      </Upper>

      <Splitter />

      <Lower>
        <PageTabs>
          {["摘要", "文本", "十六进制", "预览", "磁盘视图"].map((t) => (
            <PageTab key={t} $active={t === detail} onClick={() => setDetail(t)}>{t}</PageTab>
          ))}
        </PageTabs>
        <Summary>
          {facts.map((f) => (
            <Fact key={f.term} $marked={f.marked}>
              <dt>{f.term}</dt>
              <dd>{f.value}</dd>
            </Fact>
          ))}
        </Summary>
      </Lower>

      <StatusBar>
        <span>{device}</span>
        <span>当前项目数: 2</span>
        <span>勾选项目数: 0</span>
        <span>索引进度: 完成</span>
        <svg width="12" height="12" viewBox="0 0 12 12" fill="#c4cbd8" aria-hidden="true">
          <path d="M8 0h3v3H8ZM8 4h3v3H8ZM4 4h3v3H4ZM8 8h3v3H8ZM4 8h3v3H4ZM0 8h3v3H0Z" />
        </svg>
      </StatusBar>
    </Window>
  );
}
